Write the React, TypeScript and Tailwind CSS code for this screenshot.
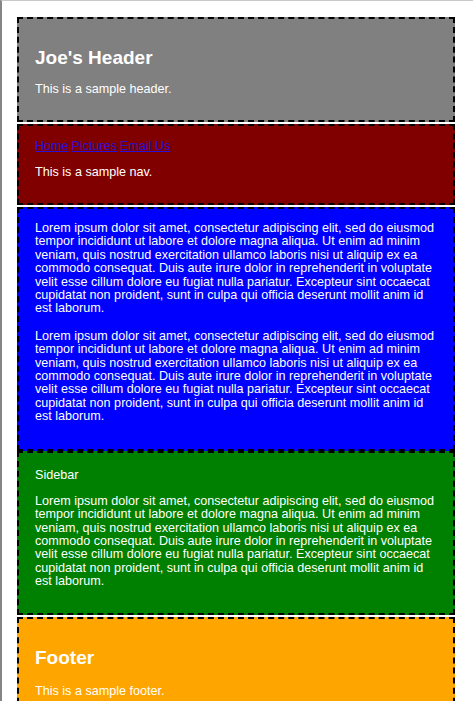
import React from "react";

const lorem =
  "Lorem ipsum dolor sit amet, consectetur adipiscing elit, sed do eiusmod tempor incididunt ut labore et dolore magna aliqua. Ut enim ad minim veniam, quis nostrud exercitation ullamco laboris nisi ut aliquip ex ea commodo consequat. Duis aute irure dolor in reprehenderit in voluptate velit esse cillum dolore eu fugiat nulla pariatur. Excepteur sint occaecat cupidatat non proident, sunt in culpa qui officia deserunt mollit anim id est laborum.";

// simple page layout demo: header, nav, main, sidebar, footer
export default function App() {
  const navLinks = ["Home", "Pictures", "Email Us"];

  return (
    <div
      className="min-h-screen bg-white border-t border-t-[#c8c8c8] border-l-2 border-l-[#858585] text-white text-[12.6px] leading-[13.4px]"
      style={{ fontFamily: '"Liberation Sans", Arial, sans-serif' }}
    >
      <div className="ml-[15px] w-[438px] pt-[16px] flex flex-col">
        {/* Header */}
        <header className="bg-[#808080] border-2 border-dashed border-black px-[16px] pt-[28px] pb-[24px]">
          <h1 className="text-[19px] leading-[21px] font-bold">Joe's Header</h1>
          <p className="mt-[14px] leading-[14px]">This is a sample header.</p>
        </header>

        {/* Nav */}
        <nav className="mt-[2px] bg-[#800000] border-2 border-dashed border-black px-[16px] pt-[13px] pb-[24px]">
          <div className="flex gap-[3px] leading-[14px]">
            {navLinks.map((link) => (
              <a key={link} href="#" className="text-[#2a10d8] underline">
                {link}
              </a>
            ))}
          </div>
          <p className="mt-[12px] leading-[14px]">This is a sample nav.</p>
        </nav>

        {/* Main content */}
        <main className="mt-[2px] bg-[#0000ff] border-2 border-dashed border-black px-[16px] pt-[13px] pb-[25px]">
          <p>{lorem}</p>
          <p className="mt-[14px]">{lorem}</p>
        </main>

        {/* Sidebar */}
        <aside className="bg-[#008000] border-2 border-dashed border-black px-[16px] pt-[15px] pb-[24px]">
          <p className="leading-[14px]">Sidebar</p>
          <p className="mt-[13px]">{lorem}</p>
        </aside>

        {/* Footer */}
        <footer className="mt-[2px] bg-[#ffa500] border-2 border-dashed border-black px-[16px] pt-[28px] pb-[24px]">
          <h2 className="text-[19px] leading-[21px] font-bold">Footer</h2>
          <p className="mt-[16px] leading-[14px]">This is a sample footer.</p>
        </footer>
      </div>
    </div>
  );
}
